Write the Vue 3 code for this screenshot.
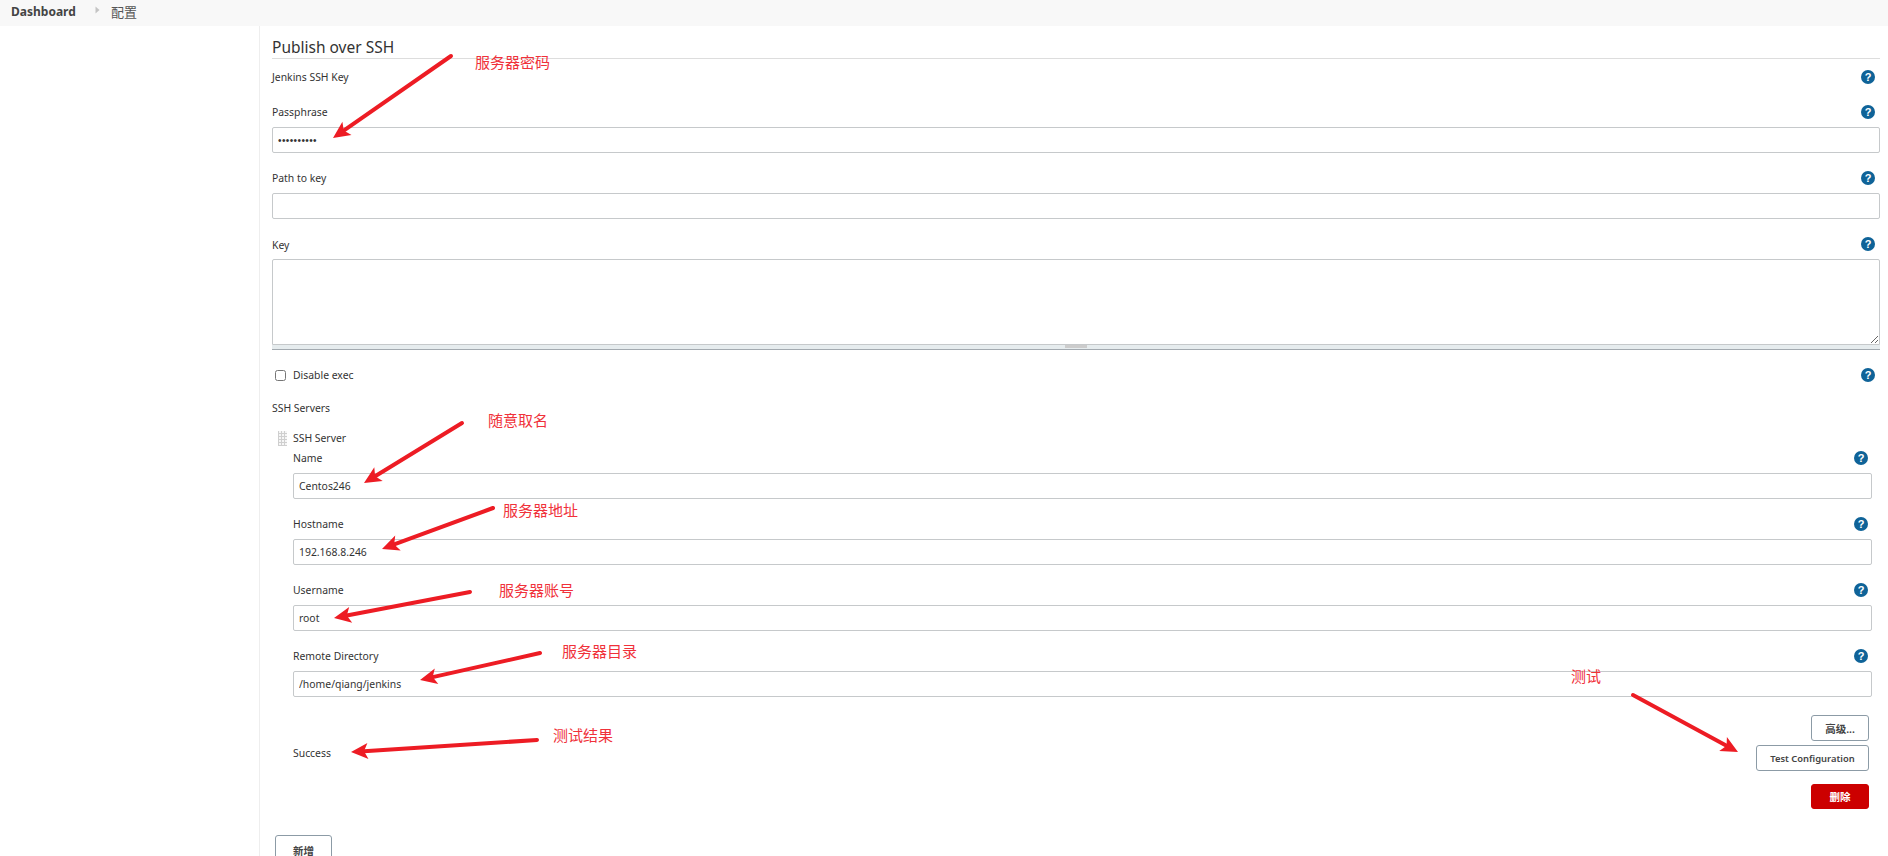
<script setup>
const HEAD_LEN = 17
const HEAD_HALF = 8
const topFields = [
  { label: 'Passphrase', type: 'password', value: '••••••••••' },
  { label: 'Path to key', type: 'text', value: '' }
]
const serverFields = [
  { label: 'Name', value: 'Centos246' },
  { label: 'Hostname', value: '192.168.8.246' },
  { label: 'Username', value: 'root' },
  { label: 'Remote Directory', value: '/home/qiang/jenkins' }
]
const notes = [
  { text: '服务器密码', x: 475, y: 62 },
  { text: '随意取名', x: 488, y: 420 },
  { text: '服务器地址', x: 503, y: 510 },
  { text: '服务器账号', x: 499, y: 590 },
  { text: '服务器目录', x: 562, y: 651 },
  { text: '测试结果', x: 553, y: 735 },
  { text: '测试', x: 1571, y: 676 }
]
const arrowLines = [
  [451, 56, 333, 138],
  [462, 423, 364, 483],
  [493, 508, 382, 549],
  [470, 592, 334, 618],
  [540, 653, 420, 680],
  [537, 740, 351, 752],
  [1633, 695, 1738, 752]
]
const arrows = arrowLines.map(([x1, y1, x2, y2]) => {
  const len = Math.hypot(x2 - x1, y2 - y1)
  const ux = (x2 - x1) / len
  const uy = (y2 - y1) / len
  const px = -uy
  const py = ux
  const bx = x2 - ux * HEAD_LEN
  const by = y2 - uy * HEAD_LEN
  const nx = x2 - ux * (HEAD_LEN - 4)
  const ny = y2 - uy * (HEAD_LEN - 4)
  const head = [
    [x2, y2],
    [bx + px * HEAD_HALF, by + py * HEAD_HALF],
    [nx, ny],
    [bx - px * HEAD_HALF, by - py * HEAD_HALF]
  ].map((p) => p.map((v) => v.toFixed(1)).join(',')).join(' ')
  return { x1, y1, x2: nx, y2: ny, head }
})
</script>

<template>
  <div class="page">
    <header class="topbar">
      <span class="crumb-root">Dashboard</span>
      <svg class="crumb-caret" width="5" height="8" viewBox="0 0 5 8"><path d="M0.5 0.5 L4.5 4 L0.5 7.5 Z" fill="#c4c4c4" /></svg>
      <span class="crumb-page">配置</span>
    </header>

    <div class="layout">
      <aside class="sidebar"></aside>
      <main class="content">
        <h3 class="section-title">Publish over SSH</h3>

        <div class="label-row first">
          <span>Jenkins SSH Key</span>
          <svg class="help" viewBox="0 0 14 14"><circle cx="7" cy="7" r="7" fill="#0f6398" /><text x="7" y="11" text-anchor="middle" class="help-mark">?</text></svg>
        </div>

        <div v-for="f in topFields" :key="f.label" class="field">
          <div class="label-row">
            <span>{{ f.label }}</span>
            <svg class="help" viewBox="0 0 14 14"><circle cx="7" cy="7" r="7" fill="#0f6398" /><text x="7" y="11" text-anchor="middle" class="help-mark">?</text></svg>
          </div>
          <input class="input" :class="{ secret: f.type === 'password' }" type="text" :value="f.value" readonly />
        </div>

        <div class="field">
          <div class="label-row">
            <span class="key-label">Key</span>
            <svg class="help" viewBox="0 0 14 14"><circle cx="7" cy="7" r="7" fill="#0f6398" /><text x="7" y="11" text-anchor="middle" class="help-mark">?</text></svg>
          </div>
          <textarea class="textarea" readonly></textarea>
          <div class="grippie"><span class="grip-handle"></span></div>
        </div>

        <div class="label-row disable">
          <label class="check"><input type="checkbox" class="checkbox" /><span>Disable exec</span></label>
          <svg class="help" viewBox="0 0 14 14"><circle cx="7" cy="7" r="7" fill="#0f6398" /><text x="7" y="11" text-anchor="middle" class="help-mark">?</text></svg>
        </div>

        <div class="label-row servers">
          <span>SSH Servers</span>
        </div>

        <section class="server">
          <div class="server-head">
            <span class="drag"></span>
            <span>SSH Server</span>
          </div>
          <div class="server-body">
            <div v-for="f in serverFields" :key="f.label" class="field">
              <div class="label-row">
                <span>{{ f.label }}</span>
                <svg class="help" viewBox="0 0 14 14"><circle cx="7" cy="7" r="7" fill="#0f6398" /><text x="7" y="11" text-anchor="middle" class="help-mark">?</text></svg>
              </div>
              <input class="input" type="text" :value="f.value" readonly />
            </div>

            <div class="actions">
              <span class="result">Success</span>
              <div class="action-buttons">
                <button class="btn small">高级...</button>
                <button class="btn">Test Configuration</button>
              </div>
            </div>
            <div class="delete-row">
              <button class="btn small danger">删除</button>
            </div>
          </div>
        </section>

        <button class="btn small add">新增</button>
      </main>
    </div>

    <svg class="overlay" width="1888" height="856" viewBox="0 0 1888 856">
      <g v-for="(a, i) in arrows" :key="i">
        <line :x1="a.x1" :y1="a.y1" :x2="a.x2" :y2="a.y2" stroke="#ed1c24" stroke-width="4" stroke-linecap="round" />
        <polygon :points="a.head" fill="#ed1c24" />
      </g>
    </svg>
    <span
      v-for="n in notes"
      :key="n.text"
      class="note"
      :style="{ left: n.x + 'px', top: n.y - 10 + 'px' }"
    >{{ n.text }}</span>
  </div>
</template>

<style>
html, body { margin: 0; background: #fff; overflow: hidden; }
</style>

<style scoped>
.page {
  position: relative;
  width: 1888px;
  height: 856px;
  overflow: hidden;
  background: #fff;
  color: #333;
  font-family: "Noto Sans", "Noto Sans CJK SC", sans-serif;
  font-size: 10.4px;
}
.topbar {
  height: 26px;
  background: #f8f8f8;
  display: flex;
  align-items: center;
  padding: 0 0 4px 11px;
  box-sizing: border-box;
}
.crumb-root { font-size: 12px; font-weight: 700; color: #444; width: 84px; }
.crumb-caret { margin-right: 11px; margin-top: -2px; }
.crumb-page { font-size: 13px; color: #555; }
.layout { display: flex; height: 830px; }
.sidebar { width: 259px; border-right: 1px solid #eee; flex: none; }
.content { flex: 1; min-width: 0; padding: 0 8px 0 12px; }
.section-title {
  margin: 0;
  height: 33px;
  box-sizing: border-box;
  padding-top: 11px;
  font-size: 15.5px;
  line-height: 20px;
  font-weight: 400;
  color: #333;
  border-bottom: 1px solid #ddd;
}
.label-row {
  height: 20px;
  display: flex;
  align-items: center;
  justify-content: space-between;
  padding-right: 5px;
  line-height: 20px;
}
.label-row.first { margin-top: 8px; margin-bottom: 15px; }
.key-label { position: relative; top: 1px; }
.field { margin-top: 15px; }
.input {
  display: block;
  width: 100%;
  height: 26px;
  margin-top: 5px;
  box-sizing: border-box;
  padding: 0 5px;
  border: 1px solid #c6c9cb;
  border-radius: 2px;
  background: #fff;
  color: #333;
  font: inherit;
  outline: none;
}
.secret { letter-spacing: 0.4px; font-size: 10px; font-family: "Liberation Sans", sans-serif; }
.textarea {
  display: block;
  width: 100%;
  height: 86px;
  margin-top: 5px;
  box-sizing: border-box;
  border: 1px solid #c6c9cb;
  border-radius: 2px 2px 0 0;
  background: #fff;
  outline: none;
  resize: vertical;
}
.grippie {
  height: 5px;
  box-sizing: border-box;
  background: #e6ecee;
  border-bottom: 1px solid #a3aab0;
  display: flex;
  justify-content: center;
}
.grip-handle { width: 22px; height: 3px; background: #ccc; }
.disable { margin-top: 15px; }
.check { display: flex; align-items: center; }
.checkbox { width: 11px; height: 11px; margin: 0 7px 0 3px; }
.servers { margin-top: 13px; }
.server { margin-top: 10px; }
.server-head { display: flex; align-items: center; height: 20px; line-height: 20px; }
.drag {
  width: 9px;
  height: 15px;
  margin: 0 6px;
  background-color: #f6f6f6;
  background-image:
    linear-gradient(90deg, #cfcfcf 1px, transparent 1px),
    linear-gradient(0deg, #cfcfcf 1px, transparent 1px);
  background-size: 3px 3px;
}
.server-body { padding-left: 21px; }
.server-body .field:first-child { margin-top: 0; }
.server-body .input { width: calc(100% - 8px); }
.server-body .label-row { padding-right: 12px; }
.actions {
  display: flex;
  justify-content: space-between;
  align-items: flex-end;
  margin-top: 18px;
  padding-right: 11px;
}
.result { line-height: 20px; margin-bottom: 8px; }
.action-buttons { display: flex; flex-direction: column; align-items: flex-end; gap: 4px; }
.btn {
  height: 26px;
  width: 113px;
  box-sizing: border-box;
  border: 1px solid #8c9ba6;
  border-radius: 3px;
  background: #fff;
  color: #444;
  font-family: inherit;
  font-size: 9.4px;
  font-weight: 600;
  padding: 0;
}
.btn.small { width: 58px; font-size: 10.5px; }
.delete-row { display: flex; justify-content: flex-end; margin-top: 13px; padding-right: 11px; }
.danger { height: 25px; background: #c00; border-color: #c00; color: #fff; }
.btn.add { display: block; width: 57px; height: 30px; margin: 26px 0 0 3px; }
.help { width: 14px; height: 14px; flex: none; }
.help-mark { fill: #fff; font-size: 11px; font-weight: 700; font-family: "Liberation Sans", sans-serif; }
.overlay { position: absolute; left: 0; top: 0; pointer-events: none; }
.note {
  position: absolute;
  font-size: 15px;
  line-height: 20px;
  color: #f0313a;
  white-space: nowrap;
  font-family: "Noto Sans CJK SC", sans-serif;
}
</style>
